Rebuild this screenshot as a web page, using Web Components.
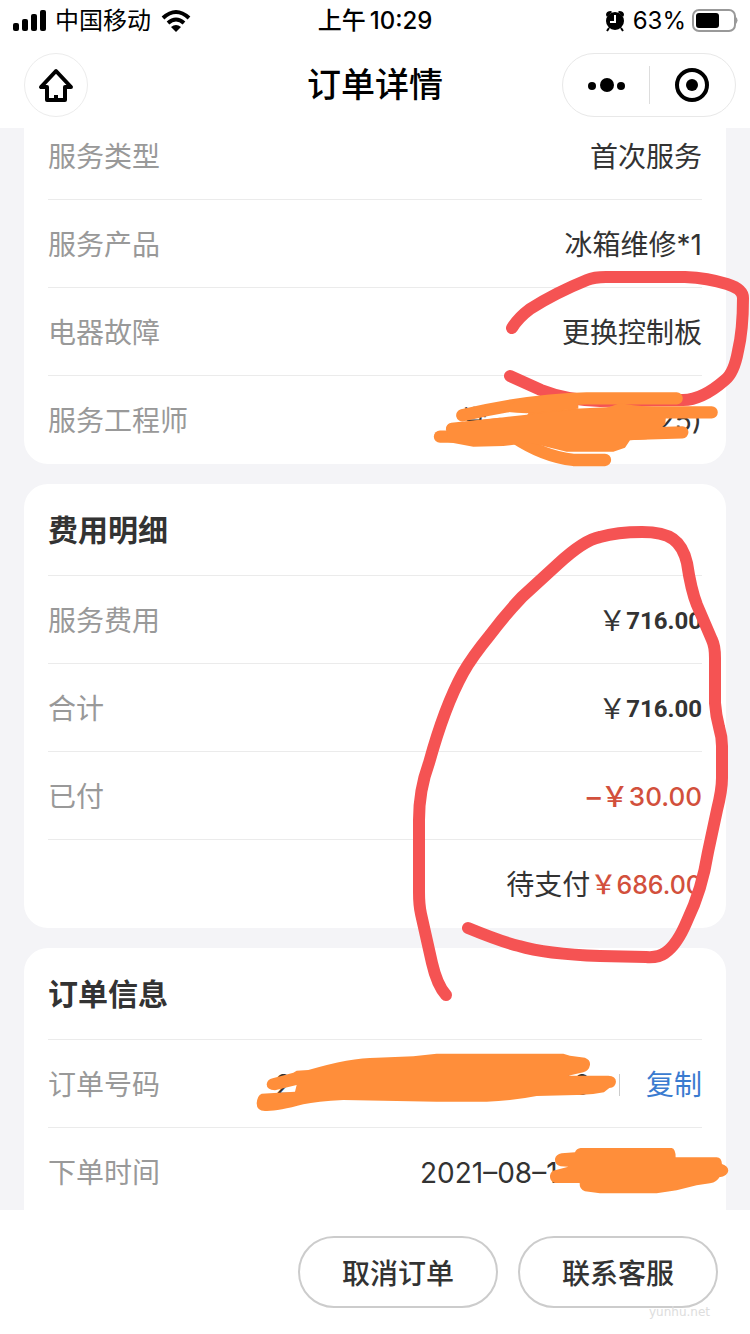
<!DOCTYPE html>
<html lang="zh-CN">
<head>
<meta charset="utf-8">
<meta name="viewport" content="width=device-width, initial-scale=1">
<title>订单详情</title>
<style>
  body { margin: 0; font-family: Inter, "Noto Sans CJK SC", sans-serif; color: #333; background: #fff; }
</style>
</head>
<body>
<order-page>
  <status-bar slot="header"></status-bar>
  <nav-bar slot="header">订单详情</nav-bar>

  <info-card class="scrolled">
    <info-row label="服务类型">首次服务</info-row>
    <info-row label="服务产品">冰箱维修*1</info-row>
    <info-row label="电器故障">更换控制板</info-row>
    <info-row label="服务工程师"><masked-text style="--w:242px"><span>常</span><span slot="end">25)</span></masked-text></info-row>
  </info-card>

  <info-card heading="费用明细">
    <info-row label="服务费用"><money-text kind="total">716.00</money-text></info-row>
    <info-row label="合计"><money-text kind="total">716.00</money-text></info-row>
    <info-row label="已付"><money-text kind="due" sign="–">30.00</money-text></info-row>
    <info-row>待支付<money-text kind="rest">686.00</money-text></info-row>
  </info-card>

  <info-card heading="订单信息" class="more">
    <info-row label="订单号码"><masked-text style="--w:316px"><span>2</span><span slot="end">00</span></masked-text><copy-button>复制</copy-button></info-row>
    <info-row label="下单时间"><masked-text style="--w:282px"><span>2021–08–1</span></masked-text></info-row>
  </info-card>

  <pill-button slot="footer">取消订单</pill-button>
  <pill-button slot="footer">联系客服</pill-button>
  <ink-layer slot="overlay"></ink-layer>
  <water-mark slot="overlay">yunhu.net</water-mark>
</order-page>

<script>
function define(name, html, setup) {
  const template = document.createElement('template');
  template.innerHTML = html;
  customElements.define(name, class extends HTMLElement {
    constructor() {
      super();
      this.attachShadow({ mode: 'open' }).append(template.content.cloneNode(true));
    }
    connectedCallback() { if (setup) setup(this, this.shadowRoot); }
  });
}

define('order-page', `
<style>
  :host { display: flex; flex-direction: column; height: 100vh; position: relative; overflow: hidden; }
  main { flex: 1; min-height: 0; overflow: hidden; background: #f4f4f7; padding: 0 24px; display: flex; flex-direction: column; gap: 20px; }
  footer { display: flex; justify-content: flex-end; gap: 20px; padding: 26px 32px; background: #fff; }
</style>
<header><slot name="header"></slot></header>
<main><slot></slot></main>
<footer><slot name="footer"></slot></footer>
<slot name="overlay"></slot>`);

define('status-bar', `
<style>
  :host { display: grid; grid-template-columns: 1fr auto 1fr; align-items: center; height: 40px; padding: 0 12px; color: #000; font-size: 24px; line-height: 42px; }
  div { display: flex; align-items: center; gap: 9px; }
  .right { justify-content: flex-end; gap: 8px; }
  .battery { display: flex; gap: 6px; align-items: center; }
  time { display: flex; gap: 4px; font-weight: 500; }
  svg { display: block; }
</style>
<div>
  <svg width="34" height="22" viewBox="0 0 34 22"><rect x="1" y="13" width="6" height="8" rx="2"/><rect x="10" y="9" width="6" height="12" rx="2"/><rect x="19" y="4" width="6" height="17" rx="2"/><rect x="28" y="0" width="6" height="21" rx="2"/></svg>
  <span>中国移动</span>
  <svg width="32" height="24" viewBox="0 0 32 24"><g fill="none" stroke="#000" stroke-width="4"><path d="M3 9Q16-3 29 9"/><path d="M8 14Q16 7 24 14"/></g><path d="M11 18Q16 14 21 18L16 23z"/></svg>
</div>
<time><span>上午</span><span>10:29</span></time>
<div class="right">
  <svg width="20" height="22" viewBox="0 0 20 22"><circle cx="10" cy="11" r="9"/><path d="M1 5Q1 1 6 1L7 2 2 7zM19 5Q19 1 14 1L13 2 18 7z"/><path d="M4 18l-2 3M16 18l2 3" stroke="#000" stroke-width="2"/><path d="M10 5v7H5" fill="none" stroke="#fff" stroke-width="2"/></svg>
  <span class="battery">63%
  <svg width="46" height="24" viewBox="0 0 46 24"><rect x="1" y="1" width="42" height="21" rx="6" fill="none" stroke="#999" stroke-width="2"/><rect x="4" y="4" width="23" height="15" rx="3"/><path d="M44 8q3 3 0 7z" fill="#999"/></svg></span>
</div>`);

define('nav-bar', `
<style>
  :host { display: grid; grid-template-columns: 1fr auto 1fr; align-items: center; height: 64px; padding: 12px 14px; color: #000; }
  h1 { margin: 0; font-size: 34px; line-height: 66px; font-weight: 500; }
  button { border: 0; background: none; padding: 0; cursor: pointer; display: grid; place-items: center; height: 62px; }
  .home { box-sizing: border-box; width: 64px; height: 64px; margin-left: 10px; border: 1px solid #ececec; border-radius: 32px; }
  .capsule { box-sizing: border-box; justify-self: end; display: grid; grid-template-columns: 1fr 1px 1fr; align-items: center; width: 174px; height: 64px; border: 1px solid #e8e8e8; border-radius: 32px; }
  i { height: 38px; background: #ddd; }
</style>
<button class="home" aria-label="首页"><svg width="38" height="36" viewBox="0 0 38 36" fill="none" stroke="#000" stroke-width="4" stroke-linecap="round" stroke-linejoin="round"><path d="M19 4L4 20H10V33H28V20H34z"/><path d="M19 28v4" stroke-linecap="butt"/></svg></button>
<h1><slot></slot></h1>
<div class="capsule">
  <button aria-label="更多"><svg width="40" height="16" viewBox="0 0 40 16"><circle cx="6" cy="9" r="4"/><circle cx="21" cy="8" r="7"/><circle cx="35" cy="9" r="4"/></svg></button>
  <i></i>
  <button aria-label="关闭"><svg width="36" height="36" viewBox="0 0 36 36"><circle cx="18" cy="18" r="15" fill="none" stroke="#000" stroke-width="4"/><circle cx="18" cy="18" r="6"/></svg></button>
</div>`);

define('info-card', `
<style>
  :host { display: block; flex: none; background: #fff; border-radius: 24px; padding: 0 24px; }
  /* the first card is partly scrolled away below the header */
  :host(.scrolled) { margin-top: -16px; border-radius: 0 0 24px 24px; }
  /* the last card runs on behind the footer */
  :host(.more) { padding-bottom: 88px; }
  h2 { margin: 0; padding-top: 2px; font-size: 30px; line-height: 89px; font-weight: 600; border-bottom: 1px solid #ebebeb; }
  h2:empty { display: none; }
  ::slotted(info-row:not(:last-child)) { border-bottom: 1px solid #ebebeb; }
</style>
<h2></h2><slot></slot>`, (el, root) => {
  const heading = el.getAttribute('heading');
  if (heading) root.querySelector('h2').textContent = heading;
});

define('info-row', `
<style>
  :host { display: flex; box-sizing: border-box; justify-content: space-between; align-items: center; height: 88px; padding-top: 2px; font-size: 28px; line-height: 40px; }
  .label { color: #999; }
  .value { display: flex; align-items: center; }
</style>
<span class="label"></span><span class="value"><slot></slot></span>`, (el, root) => { root.querySelector('.label').textContent = el.getAttribute('label') || ''; });

define('money-text', `
<style>
  :host { display: flex; align-items: center; }
  b { font-weight: inherit; font-size: 26px; }
  :host([kind="total"]) b { font: bold 24px/40px Roboto, sans-serif; }
  :host([kind="due"]), :host([kind="rest"]) { color: #d2503c; font-weight: 500; }
  :host([kind="rest"]) { font-size: 26px; }
  :host([kind="rest"]) b { font-size: 25px; }
</style>
<span></span><b><slot></slot></b>`, (el, root) => { root.querySelector('span').textContent = (el.getAttribute('sign') || '') + '￥'; });

define('masked-text', `
<style>
  :host { display: flex; justify-content: space-between; width: var(--w); }
</style>
<slot></slot><slot name="end"></slot>`);

define('copy-button', `
<style>
  :host { display: flex; align-items: center; }
  i { width: 1px; height: 22px; background: #ccc; margin: 0 26px 0 28px; }
  button { border: 0; padding: 0; background: none; font: inherit; color: #3a7bd0; cursor: pointer; }
</style>
<i></i><button><slot></slot></button>`);

define('pill-button', `
<style>
  :host { display: block; }
  button { box-sizing: border-box; width: 200px; height: 72px; border: 2px solid #ccc; border-radius: 36px; background: #fff; color: #333; font: inherit; font-size: 28px; font-weight: 500; cursor: pointer; padding: 0; }
</style>
<button><slot></slot></button>`);

define('water-mark', `
<style>:host { position: absolute; right: 40px; bottom: 14px; font: 12px/16px "DejaVu Sans", sans-serif; color: #ddd; }</style>
<slot></slot>`);

/* freehand marks drawn over the page */
define('ink-layer', `
<style>
  :host { position: absolute; inset: 0; pointer-events: none; }
  svg { display: block; width: 100%; }
</style>
<svg viewBox="0 0 750 1334" aria-hidden="true">
  <g fill="none" stroke="#f55353" stroke-width="12" stroke-linecap="round" stroke-linejoin="round">
    <path d="M512 328Q518 318 530 309Q555 293 587 280Q594 277 606 277H685Q708 278 727 284Q743 289 743 298Q743 330 738 351Q734 373 725 380Q702 400 683 400L600 401Q566 400 541 390L510 376"/>
    <path d="M446 995Q437 985 432 963L421 914Q419 905 419 892V820Q419 790 429 763C437 734 447 702 463 673Q472 657 490 635Q504 616 522 597L558 564Q584 540 600 537Q617 532 642 532Q663 532 673 539Q683 546 687 563Q691 590 697 605L712 640Q715 646 715 658V703Q716 716 719 727Q722 737 722 746V778Q722 790 717 810L708 852Q702 890 687 921Q677 945 665 953Q658 958 646 957L600 956Q545 954 519 946Q502 942 468 928"/>
  </g>
  <g fill="#ff8e3a" stroke="none">
    <g transform="translate(400 220) scale(.3333)">
      <g fill="none" stroke="#ff8e3a" stroke-width="37" stroke-linecap="round" stroke-linejoin="round">
        <path d="M187 586Q400 537 560 535H830"/><path d="M120 650H400"/><path d="M340 650Q430 710 520 720H615"/><path d="M400 590L540 584 680 577H935"/><path d="M650 643L847 637"/><path d="M156 627L300 612"/>
      </g>
      <path d="M145 612L270 597 380 584 540 567 610 567 660 550 700 556 800 565 796 612 740 658 690 661 675 683 640 695H500L390 668 310 678 220 680 140 665z"/>
      <path d="M310 575L350 540H535V566L380 580 350 578z"/>
    </g>
    <g transform="translate(240 1030) scale(.3333)">
      <path d="M98 145L160 128 170 122 205 120Q330 83 410 83L520 79 590 71H970L990 77 1035 83Q1052 90 1050 105 1047 122 1030 127L985 137H1105Q1128 138 1128 155 1127 172 1108 174L1092 187Q1050 196 1010 195L890 198Q820 212 740 215H590L310 210Q230 214 190 223 110 245 75 243 50 243 50 220 52 196 65 191L165 185 170 165 105 181Q80 180 80 163 82 148 98 145z"/>
      <path d="M965 370L1005 367Q1010 355 1022 354H1295Q1307 356 1307 382H1430Q1445 383 1446 402 1465 408 1465 422 1463 438 1438 442 1432 456 1410 460L1370 466 1310 481 1250 490H1080L1035 484Q1018 478 1019 459H945Q929 454 930 437 932 422 948 420L985 410 962 409Q944 404 945 387 948 373 965 370z"/>
    </g>
  </g>
</svg>`);
</script>
</body>
</html>
